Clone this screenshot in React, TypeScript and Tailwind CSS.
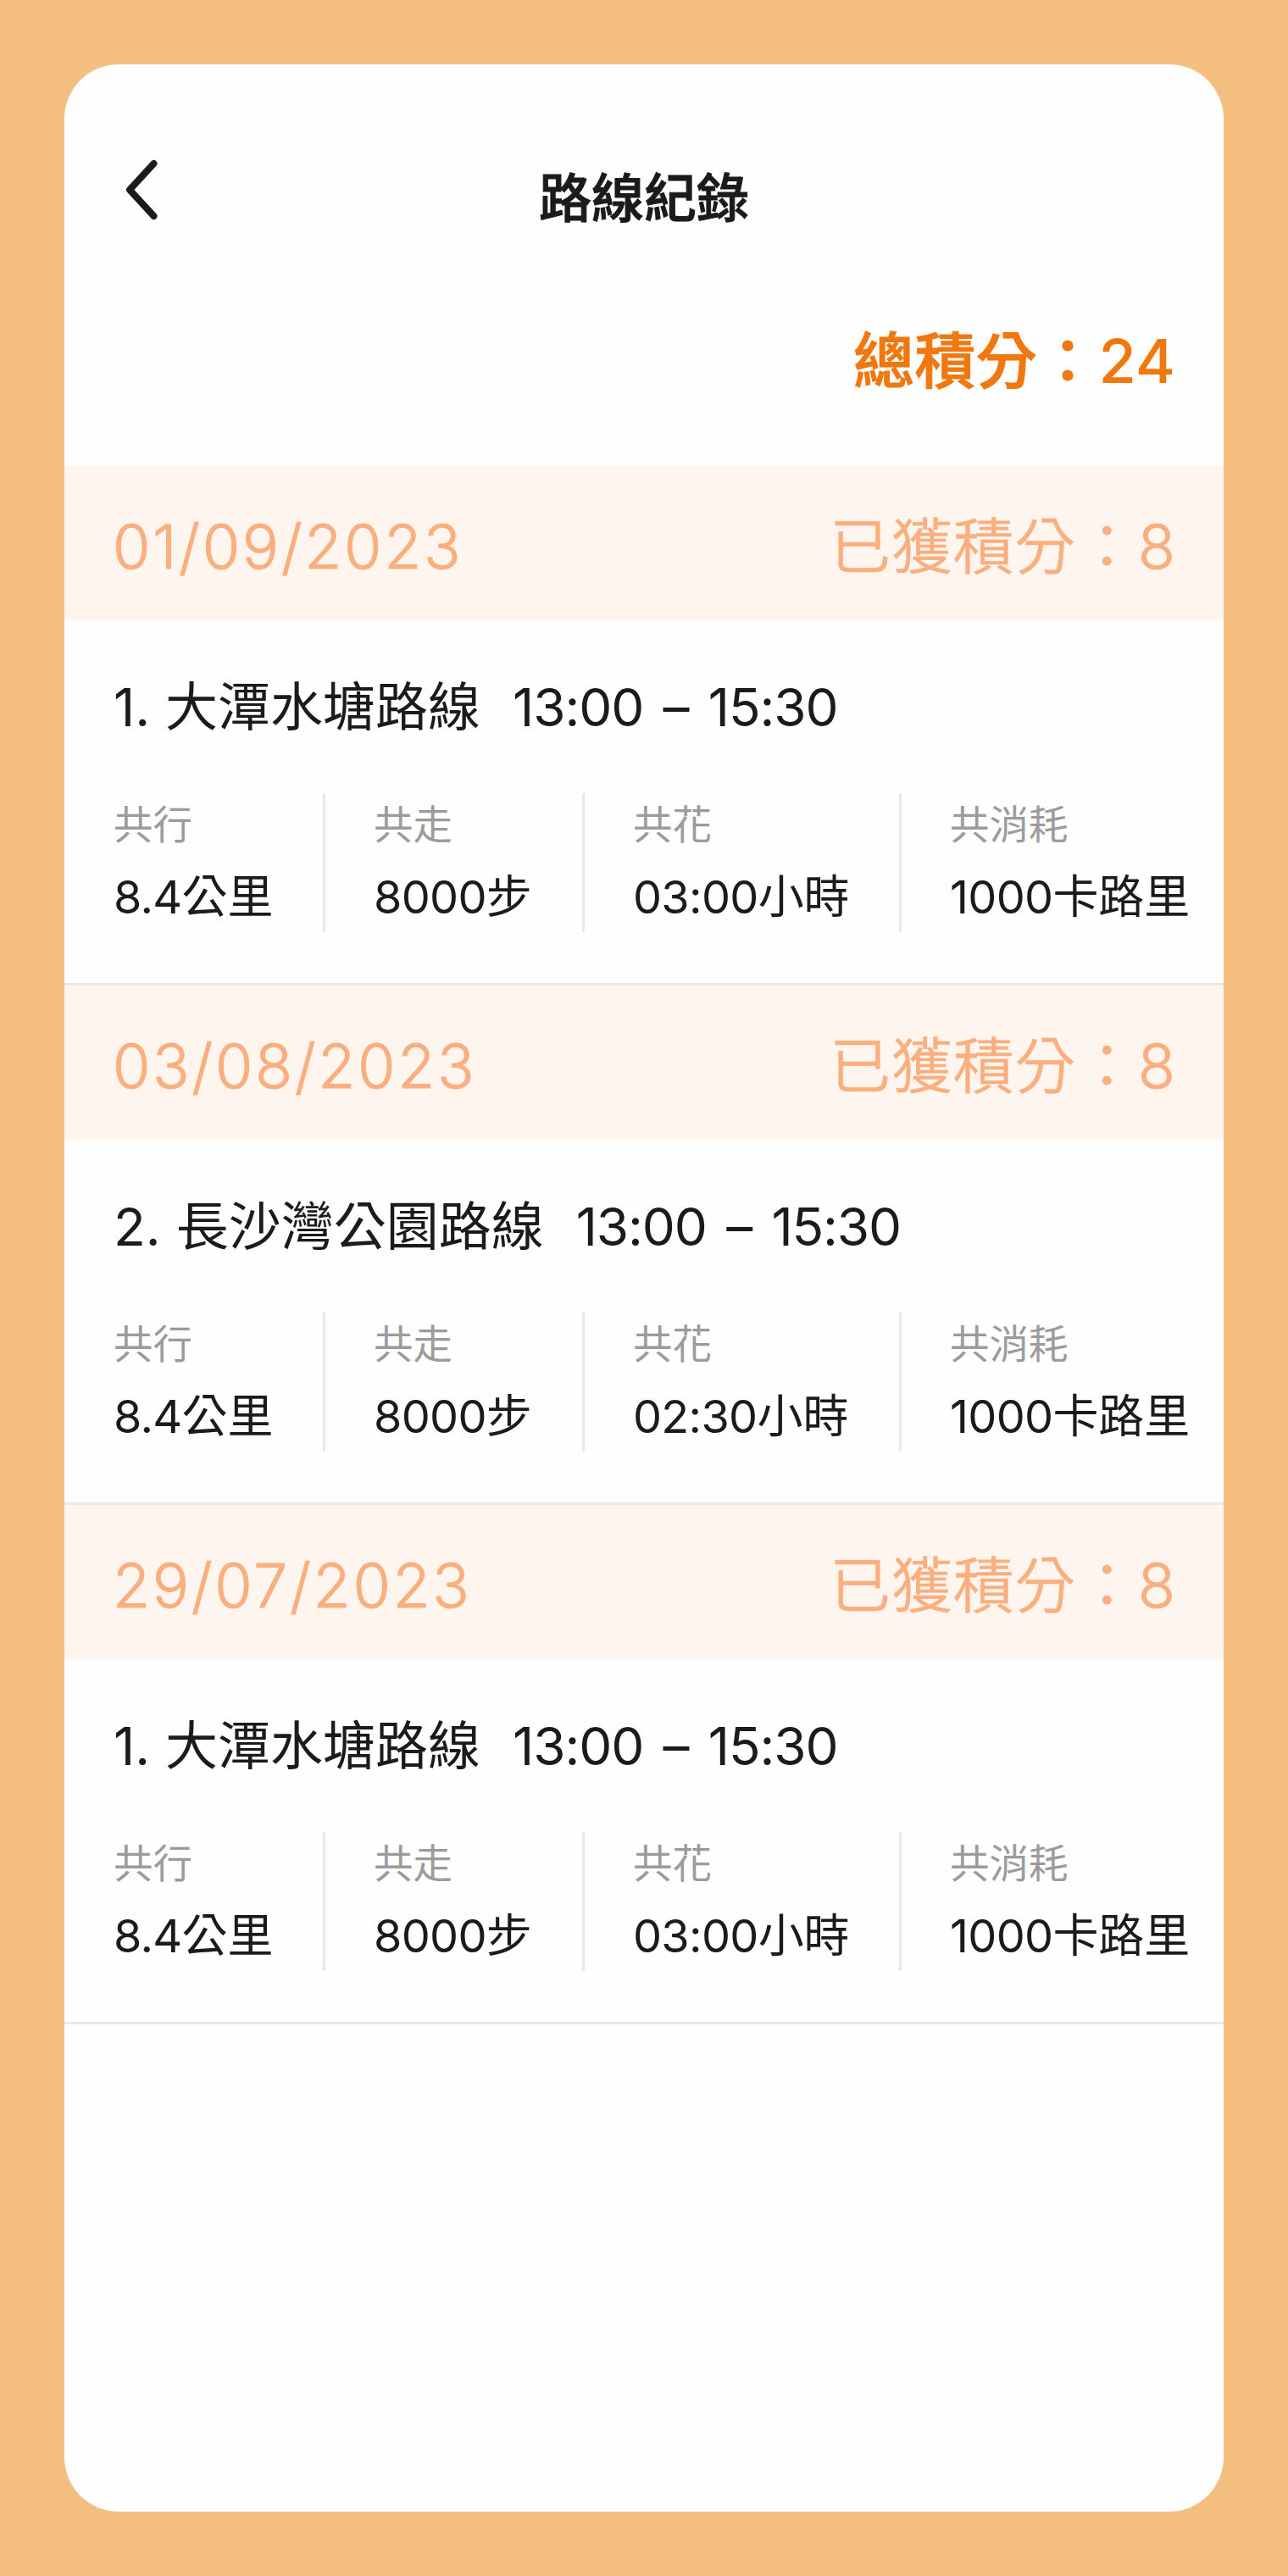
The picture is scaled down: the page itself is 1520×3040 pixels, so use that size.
import React from "react";

interface StatType {
  label: string;
  value: string;
  unit: string;
}

interface RouteRecord {
  id: number;
  date: string;
  points: number;
  order: number;
  routeName: string;
  time: string;
  stats: StatType[];
}

const makeStats = (duration: string): StatType[] => [
  { label: "共行", value: "8.4", unit: "公里" },
  { label: "共走", value: "8000", unit: "步" },
  { label: "共花", value: duration, unit: "小時" },
  { label: "共消耗", value: "1000", unit: "卡路里" },
];

const records: RouteRecord[] = [
  {
    id: 1,
    date: "01/09/2023",
    points: 8,
    order: 1,
    routeName: "大潭水塘路線",
    time: "13:00 – 15:30",
    stats: makeStats("03:00"),
  },
  {
    id: 2,
    date: "03/08/2023",
    points: 8,
    order: 2,
    routeName: "長沙灣公園路線",
    time: "13:00 – 15:30",
    stats: makeStats("02:30"),
  },
  {
    id: 3,
    date: "29/07/2023",
    points: 8,
    order: 1,
    routeName: "大潭水塘路線",
    time: "13:00 – 15:30",
    stats: makeStats("03:00"),
  },
];

const columnWidths = ["w-[250px]", "w-[306px]", "w-[374px]", "flex-1"];

const Stats = ({ stats }: { stats: StatType[] }): React.JSX.Element => {
  return (
    <div className="mt-[70px] flex h-[164px]">
      {stats.map((stat, index) => (
        <div
          key={stat.label}
          className={`shrink-0 whitespace-nowrap pt-[13px] ${columnWidths[index]} ${
            index > 0 ? "pl-[57px]" : ""
          } ${index < stats.length - 1 ? "border-r-[3px] border-[#e8e8e8]" : ""}`}
        >
          <p className="text-[46.5px] leading-[48px] text-[#9b9b9b]">
            {stat.label}
          </p>
          <p className="mt-[35px] text-[54px] leading-[54px] text-[#1b1b1d]">
            <span className="tracking-[-0.7px]">{stat.value}</span>
            {stat.unit}
          </p>
        </div>
      ))}
    </div>
  );
};

const RecordSection = ({
  record,
}: {
  record: RouteRecord;
}): React.JSX.Element => {
  return (
    <section className="border-b-[3px] border-[#e8e8e8]">
      <div className="flex h-[182px] items-center justify-between bg-[#fef6ee] px-[57px] pt-[7px] text-[72px] leading-[72px] font-light text-[#fbae7e]">
        <span className="tracking-[2.6px] [-webkit-text-stroke:0.9px]">
          {record.date}
        </span>
        <span>
          <span className="font-[350] tracking-[0.8px] [-webkit-text-stroke:0.4px]">
            已獲積分：
          </span>
          <span className="[-webkit-text-stroke:0.9px]">{record.points}</span>
        </span>
      </div>
      <div className="pt-[72px] pb-[60px] pl-[58px]">
        <div className="flex text-[62px] leading-[62px] text-[#1b1b1d]">
          <span className="mr-[18px]">{record.order}.</span>
          <span>{record.routeName}</span>
          <span className="ml-[38px] tracking-[-1.1px] [word-spacing:7px]">
            {record.time}
          </span>
        </div>
        <Stats stats={record.stats} />
      </div>
    </section>
  );
};

const App = (): React.JSX.Element => {
  return (
    <div className="h-[3040px] w-[1520px] bg-[#f5be81] p-[76px] font-['Inter','Noto_Sans_CJK_TC',sans-serif]">
      <main className="h-full overflow-hidden rounded-[64px] bg-[#fefefe]">
        <header className="grid grid-cols-[1fr_auto_1fr] items-center px-[68px] pt-[107px]">
          <svg
            width="46"
            height="80"
            viewBox="0 0 46 80"
            fill="none"
            stroke="#1b1b1d"
            strokeWidth="8"
            strokeLinecap="round"
            strokeLinejoin="round"
          >
            <path d="M37.500 10 9 41 37.500 72" />
          </svg>
          <h1 className="pt-[23px] text-[62px] leading-[57px] font-medium text-[#1b1b1d] [-webkit-text-stroke:1px]">
            路線紀錄
          </h1>
        </header>
        <p className="mt-[127px] mb-[88px] pr-[57px] text-right text-[72px] leading-[72px] font-medium text-[#f0780f]">
          <span className="tracking-[0.4px] [-webkit-text-stroke:1px]">
            總積分：
          </span>
          24
        </p>
        {records.map((record) => (
          <RecordSection key={record.id} record={record} />
        ))}
      </main>
    </div>
  );
};

export default App;
